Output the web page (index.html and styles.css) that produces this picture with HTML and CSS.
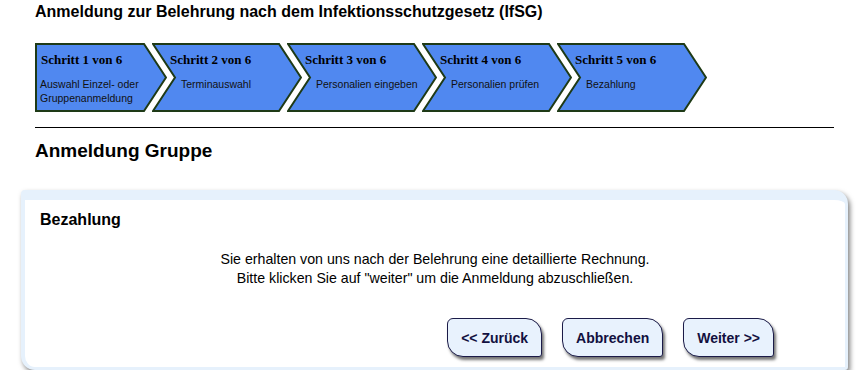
FILE: index.html
```html
<!DOCTYPE html>
<html lang="de">
<head>
  <meta charset="UTF-8" />
  <title>Anmeldung Belehrung IfSG</title>
  <link rel="stylesheet" href="styles.css">
</head>
<body>
  <div class="page">
    <h1 class="title">Anmeldung zur Belehrung nach dem Infektionsschutzgesetz (IfSG)</h1>

    <!-- Fortschritt -->
    <div class="steps">
      <div class="step step-first">
        <svg class="step-shape" viewBox="0 0 132 69" preserveAspectRatio="none"><polygon points="1,1 109,1 131,34.5 109,68 1,68" /></svg>
        <div class="step-head">Schritt 1 von 6</div>
        <div class="step-text">Auswahl Einzel- oder<br>Gruppenanmeldung</div>
      </div>
      <div class="step">
        <svg class="step-shape" viewBox="0 0 150 69" preserveAspectRatio="none"><polygon points="1,1 127,1 149,34.5 127,68 1,68 23,34.5" /></svg>
        <div class="step-head">Schritt 2 von 6</div>
        <div class="step-text">Terminauswahl</div>
      </div>
      <div class="step">
        <svg class="step-shape" viewBox="0 0 150 69" preserveAspectRatio="none"><polygon points="1,1 127,1 149,34.5 127,68 1,68 23,34.5" /></svg>
        <div class="step-head">Schritt 3 von 6</div>
        <div class="step-text">Personalien eingeben</div>
      </div>
      <div class="step">
        <svg class="step-shape" viewBox="0 0 150 69" preserveAspectRatio="none"><polygon points="1,1 127,1 149,34.5 127,68 1,68 23,34.5" /></svg>
        <div class="step-head">Schritt 4 von 6</div>
        <div class="step-text">Personalien prüfen</div>
      </div>
      <div class="step">
        <svg class="step-shape" viewBox="0 0 150 69" preserveAspectRatio="none"><polygon points="1,1 127,1 149,34.5 127,68 1,68 23,34.5" /></svg>
        <div class="step-head">Schritt 5 von 6</div>
        <div class="step-text">Bezahlung</div>
      </div>
    </div>

    <hr class="rule">

    <h2 class="subtitle">Anmeldung Gruppe</h2>

    <div class="panel">
      <h3 class="panel-title">Bezahlung</h3>
      <p class="info">Sie erhalten von uns nach der Belehrung eine detaillierte Rechnung.<br>Bitte klicken Sie auf "weiter" um die Anmeldung abzuschließen.</p>
      <div class="actions">
        <button class="btn">&lt;&lt; Zurück</button>
        <button class="btn">Abbrechen</button>
        <button class="btn">Weiter &gt;&gt;</button>
      </div>
    </div>
  </div>
</body>
</html>
```

FILE: styles.css
```css
html, body {
  margin: 0;
  padding: 0;
  background: #fff;
  color: #000;
  font-family: "Liberation Sans", Arial, sans-serif;
}

.page {
  width: 799px;
  margin-left: 35px;
}

.title {
  margin: 0;
  padding-top: 3px;
  font-size: 16px;
  line-height: 18px;
  font-weight: bold;
}

/* Schritte */
.steps {
  display: flex;
  margin-top: 22px;
  height: 69px;
}

.step {
  position: relative;
  width: 150px;
  height: 69px;
  margin-left: -15px;
  padding-left: 18px;
  box-sizing: border-box;
}

.step-first {
  width: 132px;
  margin-left: 0;
  padding-left: 6px;
}

.step-shape {
  position: absolute;
  top: 0;
  left: 0;
  width: 100%;
  height: 100%;
}

.step-shape polygon {
  fill: #5088f0;
  stroke: #1e3a16;
  stroke-width: 2;
}

.step-head,
.step-text {
  position: relative;
}

.step-head {
  padding-top: 9px;
  font-family: "Liberation Serif", "Times New Roman", serif;
  font-weight: bold;
  font-size: 13px;
  line-height: 15px;
}

.step-text {
  margin-top: 10px;
  padding-left: 11px;
  font-size: 10.5px;
  line-height: 14px;
  color: #111;
}

.step-first .step-text {
  padding-left: 0;
  margin-left: -1px;
}

.rule {
  margin: 15px 0 0;
  border: none;
  border-top: 1px solid #000;
  height: 0;
}

.subtitle {
  margin: 0;
  padding-top: 12px;
  font-size: 19px;
  line-height: 22px;
  font-weight: bold;
}

/* Bereich Bezahlung */
.panel {
  margin: 28px -14px 0;
  background: #fff;
  border: solid #e6f1fc;
  border-width: 10px 3px 3px 4px;
  border-radius: 4px 14px 3px 14px;
  box-shadow: 2px 3px 5px rgba(0, 0, 0, 0.5);
}

.panel-title {
  margin: 0;
  padding: 10px 0 0 15px;
  font-size: 16px;
  line-height: 19px;
  font-weight: bold;
}

.info {
  margin: 21px 0 0;
  text-align: center;
  font-size: 14.2px;
  line-height: 19px;
}

.actions {
  display: flex;
  justify-content: flex-end;
  gap: 20px;
  padding: 30px 71px 10px 0;
}

.btn {
  height: 39px;
  padding: 0 13px;
  background: #e8f2fd;
  color: #121040;
  border: 1.5px solid #1b1b48;
  border-radius: 6px 16px 3px 16px;
  box-shadow: 2px 3px 3px rgba(0, 0, 0, 0.55);
  font-family: "Liberation Sans", Arial, sans-serif;
  font-size: 14px;
  font-weight: bold;
  cursor: pointer;
}
```
